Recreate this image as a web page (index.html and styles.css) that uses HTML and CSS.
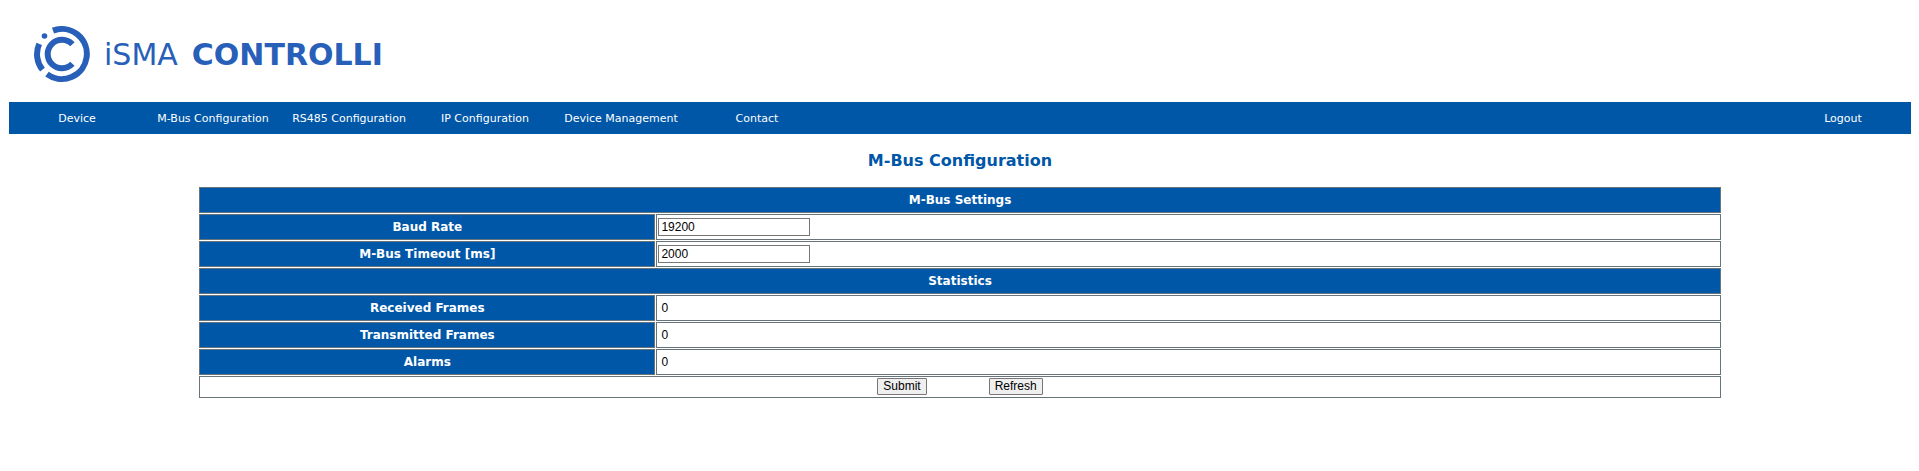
FILE: index.html
```html
<!DOCTYPE html>
<html lang="en">
<head>
<meta charset="utf-8">
<title>M-Bus Configuration</title>
<link rel="stylesheet" href="styles.css">
</head>
<body>
<header class="brand">
  <svg class="brand-mark" viewBox="0 0 56 56" aria-hidden="true">
    <g fill="none" stroke="currentColor" stroke-width="6">
      <path d="M19 4.6A25 25 0 1 1 13 48.1"/>
      <path d="M8.5 43.7A25 25 0 0 1 5.2 17.9"/>
      <path d="M38.4 18.2A14.3 14.3 0 1 0 38.4 37.8"/>
    </g>
    <circle cx="10.5" cy="10" r="2.8" fill="currentColor"/>
  </svg>
  <span class="brand-name"><span class="brand-light">iSMA</span><span class="brand-bold">CONTROLLI</span></span>
</header>
<nav class="menu">
  <a href="#device">Device</a>
  <a href="#mbus">M-Bus Configuration</a>
  <a href="#rs485">RS485 Configuration</a>
  <a href="#ip">IP Configuration</a>
  <a href="#management">Device Management</a>
  <a href="#contact">Contact</a>
  <a href="#logout" class="menu-end">Logout</a>
</nav>
<main>
  <h1>M-Bus Configuration</h1>
  <form>
    <table class="settings">
      <colgroup><col class="col-label"><col></colgroup>
      <tbody>
        <tr><th colspan="2" scope="colgroup">M-Bus Settings</th></tr>
        <tr><th scope="row"><label for="baud">Baud Rate</label></th><td><input id="baud" type="text" value="19200"></td></tr>
        <tr><th scope="row"><label for="timeout">M-Bus Timeout [ms]</label></th><td><input id="timeout" type="text" value="2000"></td></tr>
        <tr><th colspan="2" scope="colgroup">Statistics</th></tr>
        <tr><th scope="row">Received Frames</th><td class="value">0</td></tr>
        <tr><th scope="row">Transmitted Frames</th><td class="value">0</td></tr>
        <tr><th scope="row">Alarms</th><td class="value">0</td></tr>
        <tr><td colspan="2"><div class="actions"><button type="submit">Submit</button><button type="button">Refresh</button></div></td></tr>
      </tbody>
    </table>
  </form>
</main>
</body>
</html>
```
FILE: styles.css
```css
body {
  margin: 0 8px 0 9px;
  background: #fff;
  font-family: Verdana, "DejaVu Sans", sans-serif;
}

.brand {
  display: flex;
  align-items: center;
  gap: 14px;
  padding: 26px 25px 20px;
  color: #285fb8;
}

.brand-mark {
  width: 56px;
  height: 56px;
}

.brand-name {
  display: flex;
  gap: 14px;
  padding-top: 2px;
  font-size: 30px;
  line-height: 40px;
}

.brand-bold {
  font-weight: 700;
}

.menu {
  display: flex;
  background: #0057a8;
}

.menu a {
  width: 136px;
  padding-top: 2px;
  color: #fff;
  font-size: 11px;
  line-height: 30px;
  text-align: center;
  text-decoration: none;
  white-space: nowrap;
}

.menu .menu-end {
  margin-left: auto;
}

h1 {
  margin: 17px 0 15px;
  color: #0057a8;
  font-size: 16px;
  line-height: 20px;
  text-align: center;
}

.settings {
  width: calc(80% + 2px);
  margin: 0 auto;
  border-spacing: 1px;
  table-layout: fixed;
}

.col-label {
  width: 30%;
}

.settings th,
.settings td {
  padding: 1px;
  border: 1px solid #68747c;
}

.settings th {
  height: 22px;
  background: #0057a8;
  color: #fff;
  font-size: 12px;
  line-height: 16px;
}

.settings .value {
  padding-left: 4px;
}

.settings td,
.settings input,
.settings button {
  color: #000;
  font: 12px/14px Arial, "Liberation Sans", sans-serif;
}

.settings input {
  display: block;
  box-sizing: border-box;
  width: 152px;
  height: 18px;
  padding: 1px 2px;
  border: 1px solid #767676;
}

.actions {
  display: flex;
  justify-content: center;
  gap: 62px;
  padding-bottom: 1px;
}

.settings button {
  padding: 0 5px 1px;
  border: 1px solid #767676;
  border-radius: 1px;
  background: #efefef;
}
```
